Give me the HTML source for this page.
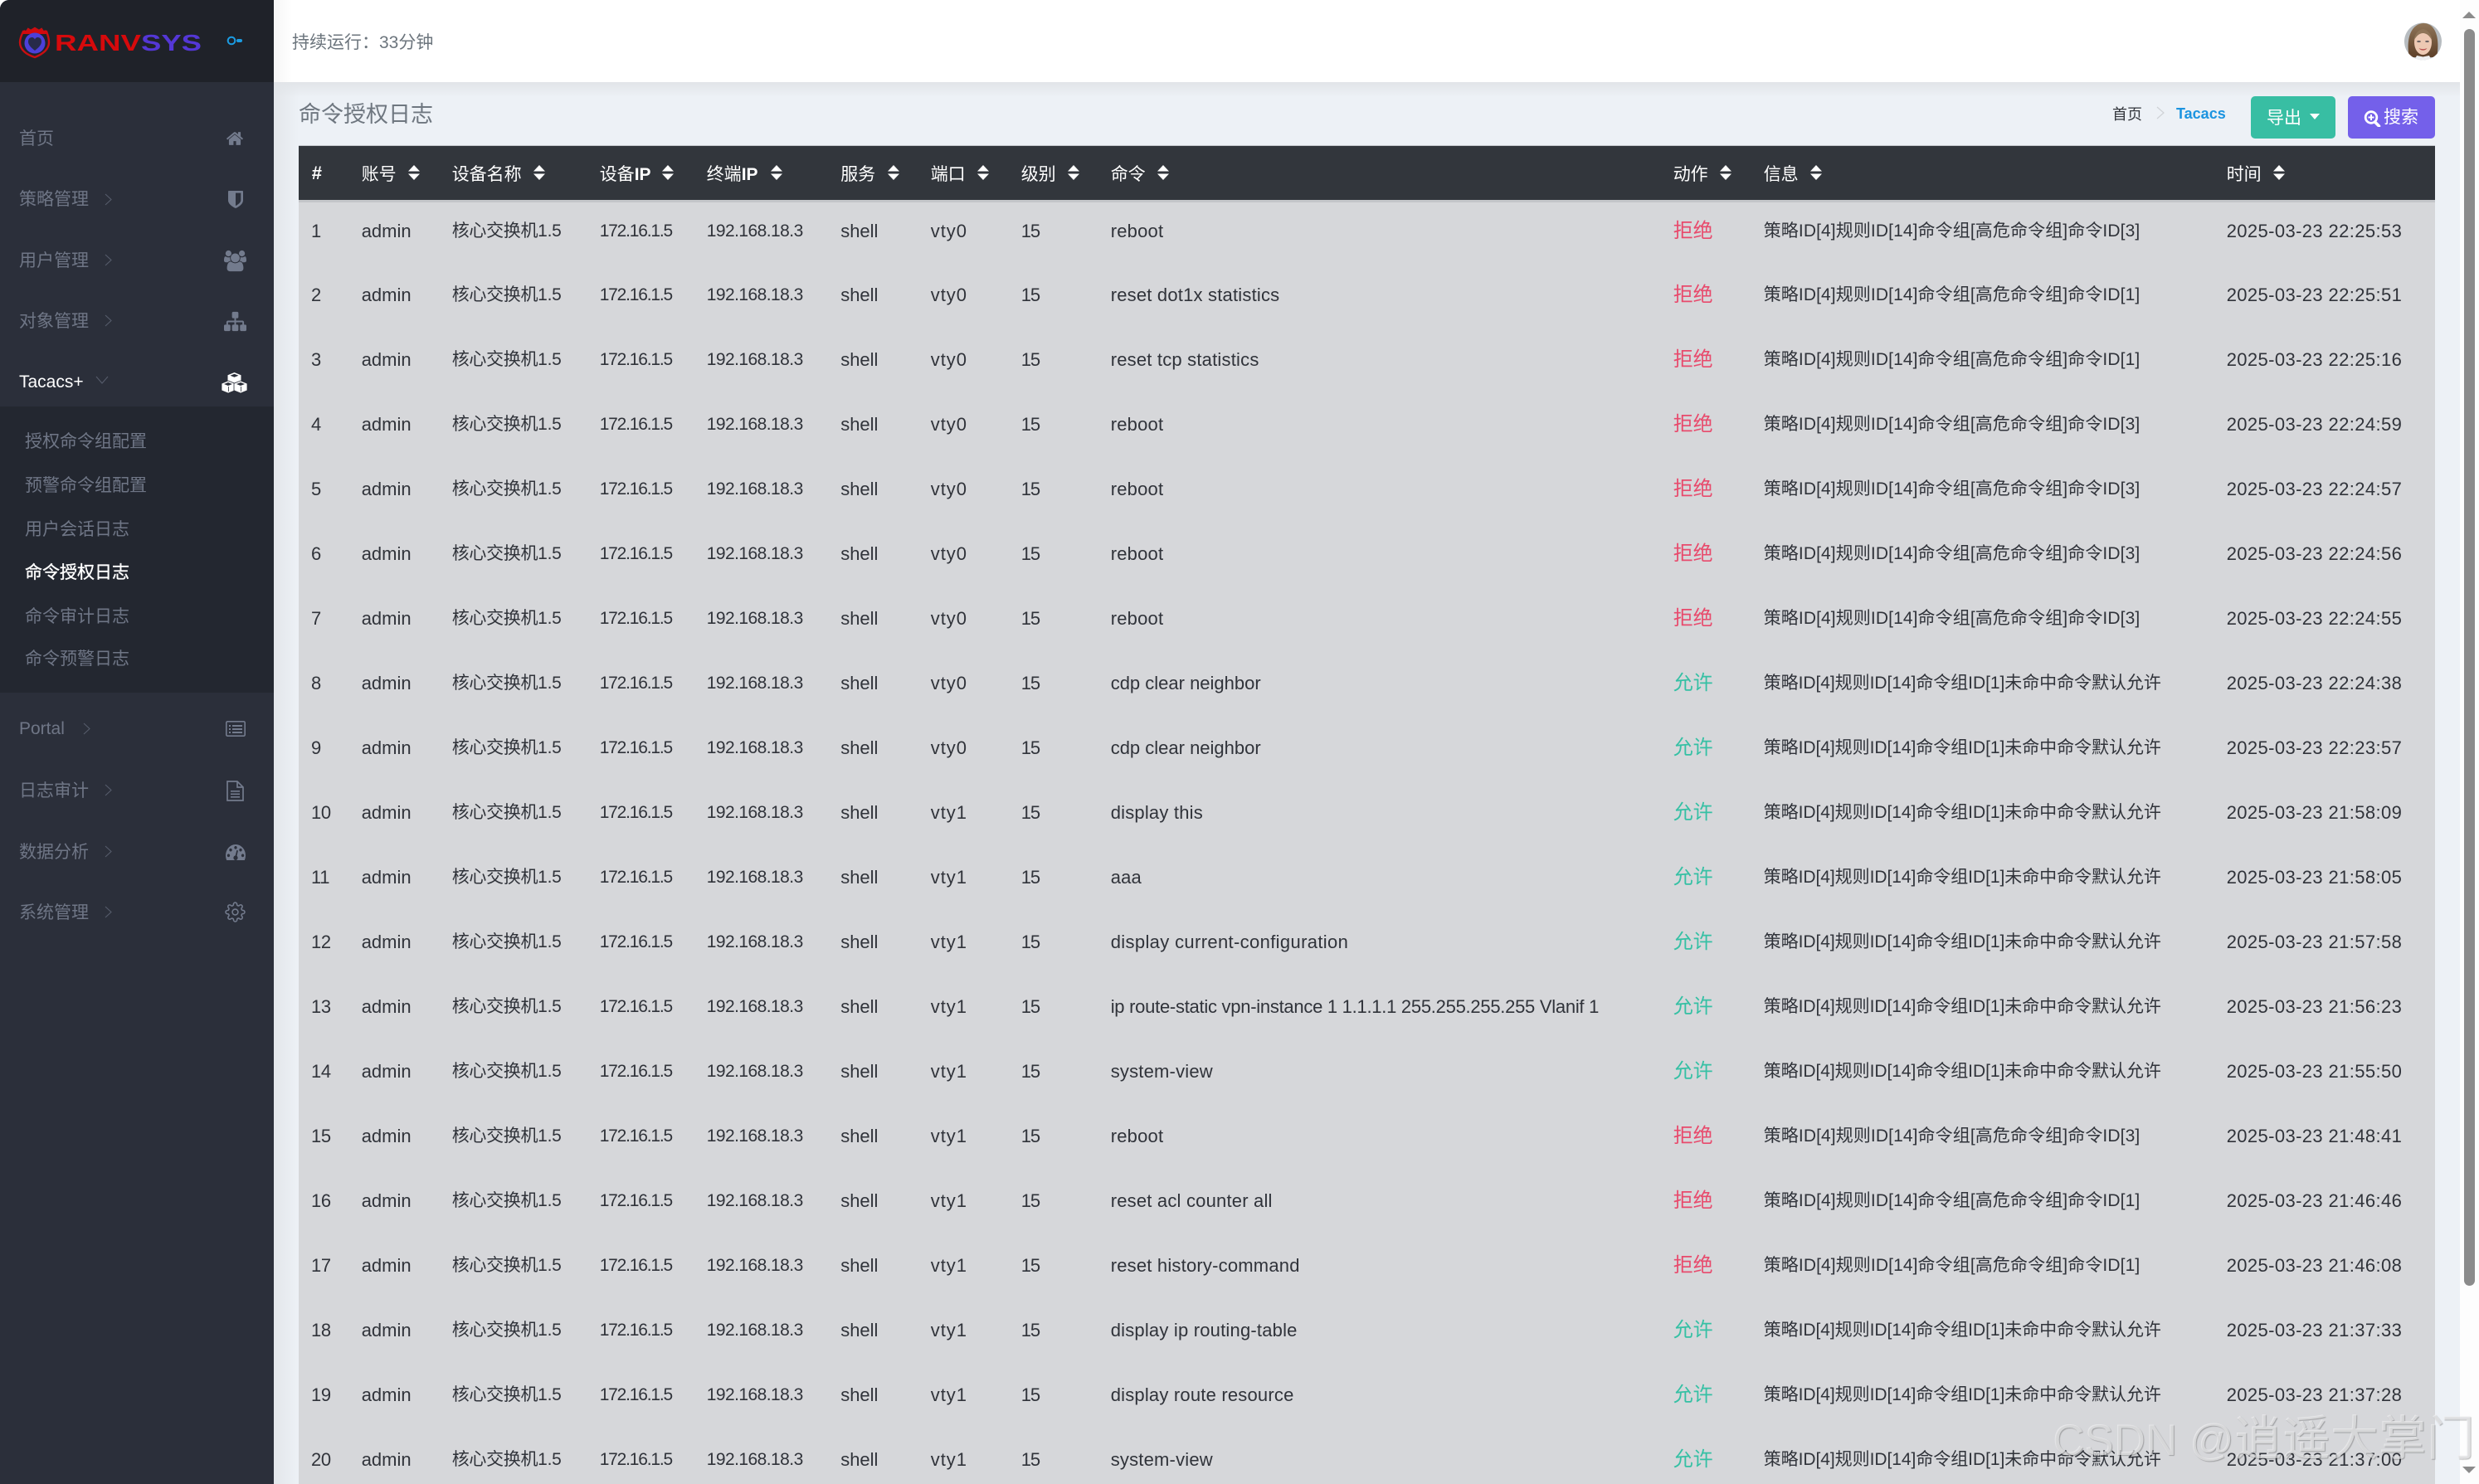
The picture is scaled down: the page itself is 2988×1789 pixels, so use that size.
<!DOCTYPE html>
<html lang="zh-CN">
<head>
<meta charset="utf-8">
<title>命令授权日志</title>
<style>
html,body{margin:0;padding:0;width:2988px;height:1789px;overflow:hidden;background:#fff}
body{position:relative;font-family:"Liberation Sans","Noto Sans CJK SC",sans-serif;font-size:21px;color:#33363c}
.abs,.n,.s,svg.i,.chev{position:absolute}
#side{position:absolute;left:0;top:0;width:330px;height:1789px;background:#2b2f3a;border-top-left-radius:11px;overflow:hidden}
#logo{position:absolute;left:0;top:0;width:330px;height:99px;background:#1f2229}
#sub{position:absolute;left:0;top:490px;width:330px;height:345px;background:#232730}
.n{left:23px;height:40px;line-height:40px;color:#6f7686;white-space:nowrap}
.s{left:30px;height:40px;line-height:40px;color:#6f7686;white-space:nowrap}
.chev{width:9px;height:15px}
svg.i{fill:#737b8d}
#main{position:absolute;left:330px;top:99px;width:2635px;height:1690px;background:#edf1f6}
#sh1{position:absolute;left:0;top:0;width:30px;height:1690px;background:linear-gradient(90deg,#e3e6ea,#edf1f6)}
#sh2{position:absolute;left:0;top:0;width:2635px;height:18px;background:linear-gradient(180deg,#e1e4e8,rgba(237,241,246,0))}
#top{position:absolute;left:330px;top:0;width:2635px;height:99px;background:linear-gradient(90deg,#f6f6f6,#fff 22px)}
#sb{position:absolute;left:2965px;top:0;width:23px;height:1789px;background:#fdfdfd}
#thumb{position:absolute;left:5px;top:35px;width:13px;height:1515px;border-radius:7px;background:#8b8b8b}
table{position:absolute;left:360px;top:175px;width:2575px;border-collapse:collapse;table-layout:fixed;border-top:1px solid #c6c9cd}
th{position:relative;height:67px;padding:0 0 0 15.7px;background:#32363c;color:#fff;font-weight:400;text-align:left;border-bottom:3px solid #c3c5c9;white-space:nowrap;box-sizing:border-box}
th svg{position:absolute;top:23px;width:14px;height:18px;fill:#fff}
td{height:78px;padding:0 0 0 15.7px;vertical-align:top;line-height:70px;background:#d6d7da;white-space:nowrap;box-sizing:border-box;font-size:22px;color:#30333a}
td:nth-child(1){padding-left:15px;letter-spacing:-.3px}
td:nth-child(3){font-size:21px;letter-spacing:-.3px}
td:nth-child(4){font-size:21px;letter-spacing:-1.2px}
td:nth-child(5){font-size:21px;letter-spacing:-.55px}
td:nth-child(7){letter-spacing:1px}
td:nth-child(8){letter-spacing:-1px}
td:nth-child(9){letter-spacing:.2px}
td:nth-child(10){font-size:24px}
td:nth-child(11){font-size:21px;letter-spacing:.1px}
tr:has(.a) td:nth-child(11){letter-spacing:-.05px}
td:nth-child(12){letter-spacing:.38px}
.r{color:#e84a6c}
.a{color:#35c0a4}
.btn{position:absolute;top:116px;height:51px;border-radius:5px;color:#fff;line-height:51px}
</style>
</head>
<body>
<div id="top"></div>
<div id="main"><div id="sh1"></div><div id="sh2"></div></div>

<div id="side">
  <div id="logo"></div>
  <div id="sub"></div>
  <svg class="abs" style="left:22px;top:31px" width="40" height="40" viewBox="0 0 40 40">
    <path d="M6 7l4 0 2-3 3 2 5-3 5 3 3-2 2 3 4 0c2 5 3 9 3 13 0 8-7 14-17 18C10 35 2 29 2 20c0-4 2-9 4-13z" fill="none" stroke="#c80f12" stroke-width="2.4"/>
    <path d="M7 5l3 2 3-3 3 2 4-3 4 3 3-2 3 3 3-2 2 5H5z" fill="#d3090c"/>
    <circle cx="20" cy="21" r="12.5" fill="#4c3fd8"/>
    <path d="M20 30c-5-4-8-7-8-11 0-3 2-5 4.500-5 1.700 0 2.900 1 3.500 2.500.6-1.500 1.800-2.500 3.500-2.500 2.500 0 4.500 2 4.500 5 0 4-3 7-8 11z" fill="#272a4a"/>
  </svg>
  <svg class="abs" style="left:64px;top:35px" width="182" height="32" viewBox="0 0 182 32">
    <text x="2" y="26" font-family="Liberation Sans" font-size="28" font-weight="700" fill="#d60a0c" textLength="104" lengthAdjust="spacingAndGlyphs">RANV</text>
    <text x="106" y="26" font-family="Liberation Sans" font-size="28" font-weight="700" fill="#5437d6" textLength="73" lengthAdjust="spacingAndGlyphs">SYS</text>
  </svg>
  <svg class="abs" style="left:273px;top:42px" width="20" height="14" viewBox="0 0 20 14">
    <circle cx="6" cy="7" r="4.300" fill="none" stroke="#1b9ce2" stroke-width="2"/>
    <rect x="12" y="5" width="7" height="4" rx="2" fill="#1b9ce2"/>
  </svg>

  <div class="n" style="top:148px">首页</div>
  <div class="n" style="top:221px">策略管理</div>
  <div class="n" style="top:295px">用户管理</div>
  <div class="n" style="top:368px">对象管理</div>
  <div class="n" style="top:441px;color:#fff">Tacacs+</div>

  <svg class="chev" style="left:126px;top:233px" viewBox="0 0 9 15"><path d="M1 1l7 6.500-7 6.500" fill="none" stroke="#565c6b" stroke-width="1.100"/></svg>
  <svg class="chev" style="left:126px;top:306px" viewBox="0 0 9 15"><path d="M1 1l7 6.500-7 6.500" fill="none" stroke="#565c6b" stroke-width="1.100"/></svg>
  <svg class="chev" style="left:126px;top:379px" viewBox="0 0 9 15"><path d="M1 1l7 6.500-7 6.500" fill="none" stroke="#565c6b" stroke-width="1.100"/></svg>
  <svg class="abs" style="left:115px;top:453px" width="16" height="10" viewBox="0 0 16 10"><path d="M1 1l7 8 7-8" fill="none" stroke="#565c6b" stroke-width="1.100"/></svg>

  <svg class="i" style="left:272px;top:156px" width="22" height="22" viewBox="0 0 1792 1792"><path d="M1472 992v480q0 26-19 45t-45 19h-384v-384h-256v384h-384q-26 0-45-19t-19-45v-480q0-1 .5-3t.5-3l575-474 575 474q1 2 1 6zm223-69l-62 74q-8 9-21 11h-3q-13 0-21-7l-692-577-692 577q-12 8-24 7-13-2-21-11l-62-74q-8-10-7-23.5t11-21.5l719-599q32-26 76-26t76 26l244 204v-195q0-14 9-23t23-9h192q14 0 23 9t9 23v408l219 182q10 8 11 21.500t-7 23.500z"/></svg>
  <svg class="i" style="left:275px;top:230px" width="18" height="21" viewBox="256 128 1280 1536" preserveAspectRatio="none"><path d="M1344 960v-640h-448v1137q119-63 213-137 235-184 235-360zm192-768v768q0 86-33.500 170.500t-83 150-118 127.500-126.500 103-121 77.500-89.500 49.500-42.500 20q-12 6-26 6t-26-6q-16-7-42.500-20t-89.500-49.500-121-77.500-126.500-103-118-127.500-83-150-33.500-170.500v-768q0-26 19-45t45-19h1152q26 0 45 19t19 45z"/></svg>
  <svg class="i" style="left:270px;top:301px" width="27" height="27" viewBox="0 0 1920 1792"><path d="M593 896q-162 5-265 128h-134q-82 0-138-40.500t-56-118.500q0-353 124-353 6 0 43.500 21t97.500 42.500 119 21.500q67 0 133-23-5 37-5 66 0 139 81 256zm1071 637q0 120-73 189.500t-194 69.500h-874q-121 0-194-69.500t-73-189.500q0-53 3.500-103.500t14-109 26.500-108.500 43-97.500 62-81 85.500-53.500 111.500-20q10 0 43 21.500t73 48 107 48 135 21.500 135-21.500 107-48 73-48 43-21.500q61 0 111.500 20t85.500 53.500 62 81 43 97.500 26.500 108.500 14 109 3.500 103.500zm-1024-1277q0 106-75 181t-181 75-181-75-75-181 75-181 181-75 181 75 75 181zm704 384q0 159-112.500 271.500t-271.500 112.500-271.500-112.500-112.500-271.500 112.500-271.500 271.500-112.500 271.500 112.500 112.500 271.500zm576 225q0 78-56 118.500t-138 40.500h-134q-103-123-265-128 81-117 81-256 0-29-5-66 66 23 133 23 59 0 119-21.500t97.500-42.500 43.500-21q124 0 124 353zm-128-609q0 106-75 181t-181 75-181-75-75-181 75-181 181-75 181 75 75 181z"/></svg>
  <svg class="i" style="left:270px;top:374px" width="27" height="27" viewBox="0 0 1792 1792"><path d="M1792 1248v320q0 40-28 68t-68 28h-320q-40 0-68-28t-28-68v-320q0-40 28-68t68-28h96v-192h-512v192h96q40 0 68 28t28 68v320q0 40-28 68t-68 28h-320q-40 0-68-28t-28-68v-320q0-40 28-68t68-28h96v-192h-512v192h96q40 0 68 28t28 68v320q0 40-28 68t-68 28h-320q-40 0-68-28t-28-68v-320q0-40 28-68t68-28h96v-192q0-52 38-90t90-38h512v-192h-96q-40 0-68-28t-28-68v-320q0-40 28-68t68-28h320q40 0 68 28t28 68v320q0 40-28 68t-68 28h-96v192h512q52 0 90 38t38 90v192h96q40 0 68 28t28 68z"/></svg>
  <svg class="abs" style="left:267px;top:449px" width="31" height="25" viewBox="0 0 31 25">
    <path d="M15.500 0L23.500 3.200V11.800L15.500 15L7.500 11.800V3.200z" fill="#fff"/>
    <path d="M15.500 1.800L20.500 3.800 15.500 5.800 10.500 3.800z" fill="#2b2f3a"/>
    <path d="M8 10L16 13.200V21.800L8 25L0 21.800V13.200z" fill="#fff" stroke="#2b2f3a" stroke-width=".8"/>
    <path d="M8 12L13 14 8 16 3 14z" fill="#2b2f3a"/>
    <path d="M23 10L31 13.200V21.800L23 25L15 21.800V13.200z" fill="#fff" stroke="#2b2f3a" stroke-width=".8"/>
    <path d="M23 12L28 14 23 16 18 14z" fill="#2b2f3a"/>
    <path d="M8.500 17v6M23.500 17v6" stroke="#2b2f3a" stroke-width=".8"/>
  </svg>

  <div class="s" style="top:513px">授权命令组配置</div>
  <div class="s" style="top:566px">预警命令组配置</div>
  <div class="s" style="top:619px">用户会话日志</div>
  <div class="s" style="top:671px;color:#fff;-webkit-text-stroke:.35px #fff">命令授权日志</div>
  <div class="s" style="top:724px">命令审计日志</div>
  <div class="s" style="top:775px">命令预警日志</div>

  <div class="n" style="top:859px">Portal</div>
  <div class="n" style="top:934px">日志审计</div>
  <div class="n" style="top:1008px">数据分析</div>
  <div class="n" style="top:1081px">系统管理</div>
  <svg class="chev" style="left:100px;top:871px" viewBox="0 0 9 15"><path d="M1 1l7 6.500-7 6.500" fill="none" stroke="#565c6b" stroke-width="1.100"/></svg>
  <svg class="chev" style="left:126px;top:945px" viewBox="0 0 9 15"><path d="M1 1l7 6.500-7 6.500" fill="none" stroke="#565c6b" stroke-width="1.100"/></svg>
  <svg class="chev" style="left:126px;top:1019px" viewBox="0 0 9 15"><path d="M1 1l7 6.500-7 6.500" fill="none" stroke="#565c6b" stroke-width="1.100"/></svg>
  <svg class="chev" style="left:126px;top:1092px" viewBox="0 0 9 15"><path d="M1 1l7 6.500-7 6.500" fill="none" stroke="#565c6b" stroke-width="1.100"/></svg>

  <svg class="abs" style="left:272px;top:869px" width="24" height="19" viewBox="0 0 24 19">
    <rect x=".8" y=".8" width="22.400" height="17.400" rx="1.500" fill="none" stroke="#737b8d" stroke-width="1.600"/>
    <path d="M4 5h2v2H4zM4 9h2v2H4zM4 13h2v2H4zM8 5h12v2H8zM8 9h12v2H8zM8 13h12v2H8z" fill="#737b8d"/>
  </svg>
  <svg class="abs" style="left:273px;top:941px" width="21" height="25" viewBox="0 0 21 25">
    <path d="M1 1h12l7 7v16H1zM13 1v7h7" fill="none" stroke="#737b8d" stroke-width="1.700"/>
    <path d="M5 12h11v1.600H5zM5 15.500h11v1.600H5zM5 19h11v1.600H5z" fill="#737b8d"/>
  </svg>
  <svg class="i" style="left:272px;top:1018px" width="24" height="19" viewBox="0 256 1792 1280" preserveAspectRatio="none"><path d="M384 1152q0-53-37.500-90.500t-90.500-37.500-90.500 37.500-37.500 90.500 37.500 90.500 90.500 37.500 90.500-37.500 37.500-90.500zm192-448q0-53-37.500-90.500t-90.500-37.500-90.500 37.500-37.500 90.500 37.500 90.500 90.500 37.500 90.500-37.500 37.500-90.500zm428 481l101-382q6-26-7.500-48.500t-38.500-29.500-48 6.500-30 39.500l-101 382q-60 5-107 43.500t-63 98.500q-20 77 20 146t117 89 146-20 89-117q16-60-6-117t-72-91zm660-33q0-53-37.500-90.500t-90.500-37.500-90.500 37.500-37.500 90.500 37.500 90.500 90.500 37.500 90.500-37.500 37.500-90.500zm-640-640q0-53-37.500-90.500t-90.500-37.500-90.500 37.500-37.500 90.500 37.500 90.500 90.500 37.500 90.500-37.500 37.500-90.500zm448 192q0-53-37.500-90.500t-90.500-37.500-90.500 37.500-37.500 90.500 37.500 90.500 90.500 37.500 90.500-37.500 37.500-90.500zm320 448q0 261-141 483-19 29-54 29h-1402q-35 0-54-29-141-221-141-483 0-182 71-348t191-286 286-191 348-71 348 71 286 191 191 286 71 348z"/></svg>
  <svg class="abs" style="left:271px;top:1087px" width="25" height="25" viewBox="0 0 24 24" fill="none" stroke="#737b8d" stroke-width="1.500">
    <circle cx="12" cy="12" r="3.300"/>
    <path d="M19.400 15a1.650 1.650 0 0 0 .33 1.820l.06.06a2 2 0 0 1 0 2.830 2 2 0 0 1-2.830 0l-.06-.06a1.650 1.650 0 0 0-1.820-.33 1.650 1.650 0 0 0-1 1.510V21a2 2 0 0 1-2 2 2 2 0 0 1-2-2v-.09A1.650 1.650 0 0 0 9 19.400a1.650 1.650 0 0 0-1.820.33l-.06.06a2 2 0 0 1-2.830 0 2 2 0 0 1 0-2.830l.06-.06a1.650 1.650 0 0 0 .33-1.820 1.650 1.650 0 0 0-1.510-1H3a2 2 0 0 1-2-2 2 2 0 0 1 2-2h.09A1.650 1.650 0 0 0 4.600 9a1.650 1.650 0 0 0-.33-1.820l-.06-.06a2 2 0 0 1 0-2.830 2 2 0 0 1 2.830 0l.06.06a1.650 1.650 0 0 0 1.820.33H9a1.650 1.650 0 0 0 1-1.510V3a2 2 0 0 1 2-2 2 2 0 0 1 2 2v.09a1.650 1.650 0 0 0 1 1.510 1.650 1.650 0 0 0 1.820-.33l.06-.06a2 2 0 0 1 2.830 0 2 2 0 0 1 0 2.830l-.06.06a1.650 1.650 0 0 0-.33 1.820V9a1.650 1.650 0 0 0 1.510 1H21a2 2 0 0 1 2 2 2 2 0 0 1-2 2h-.09a1.650 1.650 0 0 0-1.510 1z"/>
  </svg>
</div>

<div class="abs" style="left:352px;top:32px;height:40px;line-height:40px;color:#6c757d;white-space:nowrap">持续运行：33分钟</div>

<svg class="abs" style="left:2897px;top:27px" width="47" height="46" viewBox="0 0 47 46">
  <defs>
    <clipPath id="av"><ellipse cx="23.500" cy="23" rx="22.500" ry="22.500"/></clipPath>
    <linearGradient id="ha" x1="0" y1="0" x2="0" y2="1"><stop offset="0" stop-color="#8f7558"/><stop offset="1" stop-color="#5e4029"/></linearGradient>
  </defs>
  <g clip-path="url(#av)">
    <rect width="47" height="46" fill="#b7bcc0"/>
    <path d="M7 42C3 24 7 2 24 1c16 0 20 21 16 41z" fill="url(#ha)"/>
    <ellipse cx="23.500" cy="24" rx="10.500" ry="15" fill="#edc9b3"/>
    <path d="M12.500 22c1-8 5-13 11-14 6 1 10 6 11 14-3-6-7-9-11-9s-8 3-11 9z" fill="#8f7558"/>
    <ellipse cx="18.500" cy="23" rx="2.300" ry="1.100" fill="#6e6464"/>
    <ellipse cx="28.500" cy="23" rx="2.300" ry="1.100" fill="#6e6464"/>
    <path d="M18.500 31c3 1.500 7 1.500 10 0-2 3.500-8 3.500-10 0z" fill="#b9524f"/>
    <path d="M13 46l3-6 7.500 1.500 7.500-1.500 3 6z" fill="#eef0f2"/>
  </g>
</svg>

<div class="abs" style="left:360px;top:118px;height:40px;line-height:40px;font-size:27px;color:#6f7780;white-space:nowrap">命令授权日志</div>

<div class="abs" style="left:2546px;top:123px;height:30px;line-height:30px;font-size:18px;color:#33363c;white-space:nowrap">首页</div>
<svg class="abs" style="left:2599px;top:128px" width="10" height="16" viewBox="0 0 10 16"><path d="M1 1l8 7-8 7" fill="none" stroke="#cfd2d6" stroke-width="1.200"/></svg>
<div class="abs" style="left:2623px;top:122px;height:30px;line-height:30px;font-size:18px;font-weight:700;color:#1c94e0;white-space:nowrap">Tacacs</div>

<div class="btn" style="left:2713px;width:102px;background:#38bea3">
  <span class="abs" style="left:19px;top:1px">导出</span>
  <svg class="abs" style="left:71px;top:21px" width="12" height="7" viewBox="0 0 12 7"><path d="M0 0h12L6 7z" fill="#fff"/></svg>
</div>
<div class="btn" style="left:2830px;width:105px;background:#7460ea">
  <svg class="abs" style="left:19px;top:17px" width="21" height="20" viewBox="0 0 21 20">
    <circle cx="9" cy="8.500" r="6.800" fill="none" stroke="#fff" stroke-width="2.800"/>
    <path d="M13.500 14l5 5" stroke="#fff" stroke-width="3.600" stroke-linecap="round"/>
    <path d="M5.500 7.500h7v2h-7zM8 5h2v7H8z" fill="#fff"/>
  </svg>
  <span class="abs" style="left:43px;top:0;white-space:nowrap">搜索</span>
</div>

<table>
<colgroup><col style="width:60px"><col style="width:109px"><col style="width:178px"><col style="width:129px"><col style="width:161.5px"><col style="width:108.5px"><col style="width:109px"><col style="width:108px"><col style="width:678px"><col style="width:109px"><col style="width:558px"><col style="width:267px"></colgroup>
<thead><tr>
<th><b style="font-size:22px">#</b></th>
<th>账号<svg style="left:72px" viewBox="0 0 14 18"><path d="M7 0l7 7.500H0zM7 18L0 10.500h14z"/></svg></th>
<th>设备名称<svg style="left:114px" viewBox="0 0 14 18"><path d="M7 0l7 7.500H0zM7 18L0 10.500h14z"/></svg></th>
<th>设备<b>IP</b><svg style="left:91px" viewBox="0 0 14 18"><path d="M7 0l7 7.500H0zM7 18L0 10.500h14z"/></svg></th>
<th>终端<b>IP</b><svg style="left:93px" viewBox="0 0 14 18"><path d="M7 0l7 7.500H0zM7 18L0 10.500h14z"/></svg></th>
<th>服务<svg style="left:72px" viewBox="0 0 14 18"><path d="M7 0l7 7.500H0zM7 18L0 10.500h14z"/></svg></th>
<th>端口<svg style="left:72px" viewBox="0 0 14 18"><path d="M7 0l7 7.500H0zM7 18L0 10.500h14z"/></svg></th>
<th>级别<svg style="left:72px" viewBox="0 0 14 18"><path d="M7 0l7 7.500H0zM7 18L0 10.500h14z"/></svg></th>
<th>命令<svg style="left:72px" viewBox="0 0 14 18"><path d="M7 0l7 7.500H0zM7 18L0 10.500h14z"/></svg></th>
<th>动作<svg style="left:72px" viewBox="0 0 14 18"><path d="M7 0l7 7.500H0zM7 18L0 10.500h14z"/></svg></th>
<th>信息<svg style="left:72px" viewBox="0 0 14 18"><path d="M7 0l7 7.500H0zM7 18L0 10.500h14z"/></svg></th>
<th>时间<svg style="left:72px" viewBox="0 0 14 18"><path d="M7 0l7 7.500H0zM7 18L0 10.500h14z"/></svg></th>
</tr></thead>
<tbody>
<tr><td>1</td><td>admin</td><td>核心交换机1.5</td><td>172.16.1.5</td><td>192.168.18.3</td><td>shell</td><td>vty0</td><td>15</td><td>reboot</td><td class="r">拒绝</td><td>策略ID[4]规则ID[14]命令组[高危命令组]命令ID[3]</td><td>2025-03-23 22:25:53</td></tr>
<tr><td>2</td><td>admin</td><td>核心交换机1.5</td><td>172.16.1.5</td><td>192.168.18.3</td><td>shell</td><td>vty0</td><td>15</td><td>reset dot1x statistics</td><td class="r">拒绝</td><td>策略ID[4]规则ID[14]命令组[高危命令组]命令ID[1]</td><td>2025-03-23 22:25:51</td></tr>
<tr><td>3</td><td>admin</td><td>核心交换机1.5</td><td>172.16.1.5</td><td>192.168.18.3</td><td>shell</td><td>vty0</td><td>15</td><td>reset tcp statistics</td><td class="r">拒绝</td><td>策略ID[4]规则ID[14]命令组[高危命令组]命令ID[1]</td><td>2025-03-23 22:25:16</td></tr>
<tr><td>4</td><td>admin</td><td>核心交换机1.5</td><td>172.16.1.5</td><td>192.168.18.3</td><td>shell</td><td>vty0</td><td>15</td><td>reboot</td><td class="r">拒绝</td><td>策略ID[4]规则ID[14]命令组[高危命令组]命令ID[3]</td><td>2025-03-23 22:24:59</td></tr>
<tr><td>5</td><td>admin</td><td>核心交换机1.5</td><td>172.16.1.5</td><td>192.168.18.3</td><td>shell</td><td>vty0</td><td>15</td><td>reboot</td><td class="r">拒绝</td><td>策略ID[4]规则ID[14]命令组[高危命令组]命令ID[3]</td><td>2025-03-23 22:24:57</td></tr>
<tr><td>6</td><td>admin</td><td>核心交换机1.5</td><td>172.16.1.5</td><td>192.168.18.3</td><td>shell</td><td>vty0</td><td>15</td><td>reboot</td><td class="r">拒绝</td><td>策略ID[4]规则ID[14]命令组[高危命令组]命令ID[3]</td><td>2025-03-23 22:24:56</td></tr>
<tr><td>7</td><td>admin</td><td>核心交换机1.5</td><td>172.16.1.5</td><td>192.168.18.3</td><td>shell</td><td>vty0</td><td>15</td><td>reboot</td><td class="r">拒绝</td><td>策略ID[4]规则ID[14]命令组[高危命令组]命令ID[3]</td><td>2025-03-23 22:24:55</td></tr>
<tr><td>8</td><td>admin</td><td>核心交换机1.5</td><td>172.16.1.5</td><td>192.168.18.3</td><td>shell</td><td>vty0</td><td>15</td><td style="letter-spacing:0">cdp clear neighbor</td><td class="a">允许</td><td>策略ID[4]规则ID[14]命令组ID[1]未命中命令默认允许</td><td>2025-03-23 22:24:38</td></tr>
<tr><td>9</td><td>admin</td><td>核心交换机1.5</td><td>172.16.1.5</td><td>192.168.18.3</td><td>shell</td><td>vty0</td><td>15</td><td style="letter-spacing:0">cdp clear neighbor</td><td class="a">允许</td><td>策略ID[4]规则ID[14]命令组ID[1]未命中命令默认允许</td><td>2025-03-23 22:23:57</td></tr>
<tr><td>10</td><td>admin</td><td>核心交换机1.5</td><td>172.16.1.5</td><td>192.168.18.3</td><td>shell</td><td>vty1</td><td>15</td><td>display this</td><td class="a">允许</td><td>策略ID[4]规则ID[14]命令组ID[1]未命中命令默认允许</td><td>2025-03-23 21:58:09</td></tr>
<tr><td>11</td><td>admin</td><td>核心交换机1.5</td><td>172.16.1.5</td><td>192.168.18.3</td><td>shell</td><td>vty1</td><td>15</td><td>aaa</td><td class="a">允许</td><td>策略ID[4]规则ID[14]命令组ID[1]未命中命令默认允许</td><td>2025-03-23 21:58:05</td></tr>
<tr><td>12</td><td>admin</td><td>核心交换机1.5</td><td>172.16.1.5</td><td>192.168.18.3</td><td>shell</td><td>vty1</td><td>15</td><td style="letter-spacing:.35px">display current-configuration</td><td class="a">允许</td><td>策略ID[4]规则ID[14]命令组ID[1]未命中命令默认允许</td><td>2025-03-23 21:57:58</td></tr>
<tr><td>13</td><td>admin</td><td>核心交换机1.5</td><td>172.16.1.5</td><td>192.168.18.3</td><td>shell</td><td>vty1</td><td>15</td><td style="letter-spacing:-.27px">ip route-static vpn-instance 1 1.1.1.1 255.255.255.255 Vlanif 1</td><td class="a">允许</td><td>策略ID[4]规则ID[14]命令组ID[1]未命中命令默认允许</td><td>2025-03-23 21:56:23</td></tr>
<tr><td>14</td><td>admin</td><td>核心交换机1.5</td><td>172.16.1.5</td><td>192.168.18.3</td><td>shell</td><td>vty1</td><td>15</td><td>system-view</td><td class="a">允许</td><td>策略ID[4]规则ID[14]命令组ID[1]未命中命令默认允许</td><td>2025-03-23 21:55:50</td></tr>
<tr><td>15</td><td>admin</td><td>核心交换机1.5</td><td>172.16.1.5</td><td>192.168.18.3</td><td>shell</td><td>vty1</td><td>15</td><td>reboot</td><td class="r">拒绝</td><td>策略ID[4]规则ID[14]命令组[高危命令组]命令ID[3]</td><td>2025-03-23 21:48:41</td></tr>
<tr><td>16</td><td>admin</td><td>核心交换机1.5</td><td>172.16.1.5</td><td>192.168.18.3</td><td>shell</td><td>vty1</td><td>15</td><td>reset acl counter all</td><td class="r">拒绝</td><td>策略ID[4]规则ID[14]命令组[高危命令组]命令ID[1]</td><td>2025-03-23 21:46:46</td></tr>
<tr><td>17</td><td>admin</td><td>核心交换机1.5</td><td>172.16.1.5</td><td>192.168.18.3</td><td>shell</td><td>vty1</td><td>15</td><td>reset history-command</td><td class="r">拒绝</td><td>策略ID[4]规则ID[14]命令组[高危命令组]命令ID[1]</td><td>2025-03-23 21:46:08</td></tr>
<tr><td>18</td><td>admin</td><td>核心交换机1.5</td><td>172.16.1.5</td><td>192.168.18.3</td><td>shell</td><td>vty1</td><td>15</td><td>display ip routing-table</td><td class="a">允许</td><td>策略ID[4]规则ID[14]命令组ID[1]未命中命令默认允许</td><td>2025-03-23 21:37:33</td></tr>
<tr><td>19</td><td>admin</td><td>核心交换机1.5</td><td>172.16.1.5</td><td>192.168.18.3</td><td>shell</td><td>vty1</td><td>15</td><td>display route resource</td><td class="a">允许</td><td>策略ID[4]规则ID[14]命令组ID[1]未命中命令默认允许</td><td>2025-03-23 21:37:28</td></tr>
<tr><td>20</td><td>admin</td><td>核心交换机1.5</td><td>172.16.1.5</td><td>192.168.18.3</td><td>shell</td><td>vty1</td><td>15</td><td>system-view</td><td class="a">允许</td><td>策略ID[4]规则ID[14]命令组ID[1]未命中命令默认允许</td><td>2025-03-23 21:37:00</td></tr>
</tbody>
</table>

<div id="sb">
  <svg class="abs" style="left:3px;top:14px" width="16" height="8" viewBox="0 0 16 8"><path d="M8 0l8 8H0z" fill="#8b8b8b"/></svg>
  <div id="thumb"></div>
  <svg class="abs" style="left:3px;top:1768px" width="16" height="8" viewBox="0 0 16 8"><path d="M0 0h16L8 8z" fill="#8b8b8b"/></svg>
</div>

<div class="abs" style="left:2474px;top:1700px;height:70px;line-height:70px;white-space:nowrap;color:rgba(240,240,242,.68);text-shadow:1px 1px 1px rgba(0,0,0,.25);font-family:'Liberation Sans','Noto Sans CJK SC',sans-serif"><span style="font-size:53px">CSDN @</span><span style="font-size:58px">逍遥大掌门</span></div>
</body>
</html>
